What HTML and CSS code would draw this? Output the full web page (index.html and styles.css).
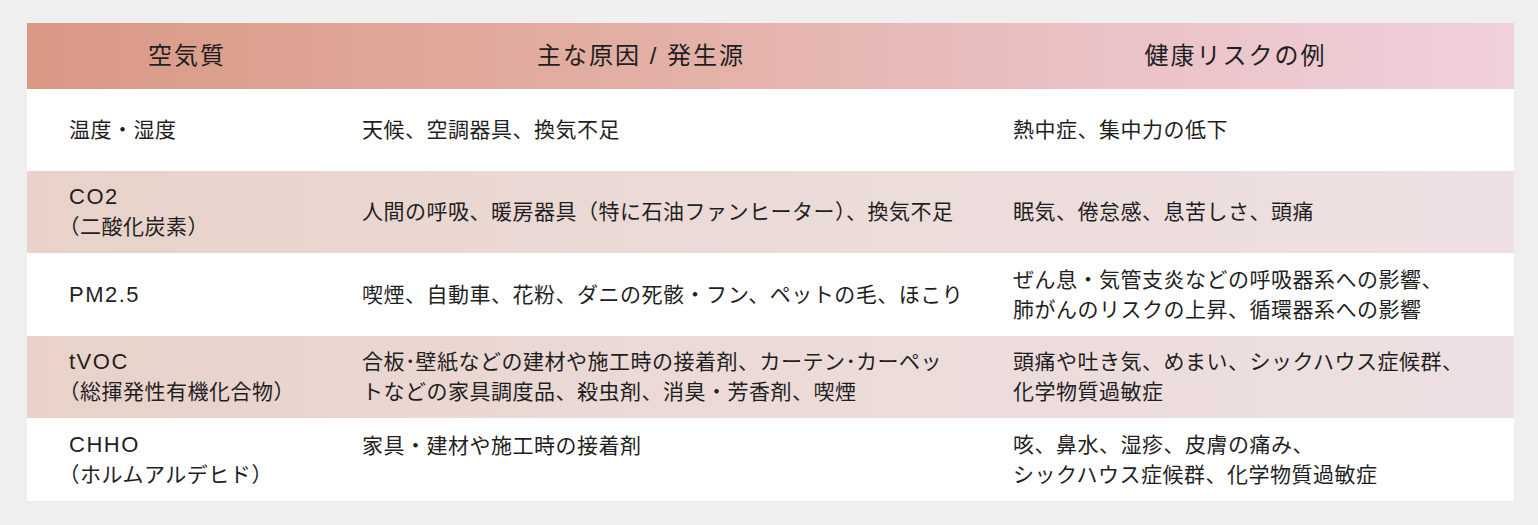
FILE: index.html
```html
<!DOCTYPE html>
<html lang="ja">
<head>
<meta charset="utf-8">
<title>空気質と健康リスク</title>
<link rel="stylesheet" href="styles.css">
</head>
<body>
<div class="page">
  <div class="table">
    <div class="row head">
      <div class="cell c1">空気質</div>
      <div class="cell c2">主な原因 / 発生源</div>
      <div class="cell c3">健康リスクの例</div>
    </div>
    <div class="row r1">
      <div class="cell c1">温度・湿度</div>
      <div class="cell c2">天候、空調器具、換気不足</div>
      <div class="cell c3">熱中症、集中力の低下</div>
    </div>
    <div class="row r2 shade">
      <div class="cell c1"><span class="lat">CO2</span><br><span class="hp">（</span>二酸化炭素<span class="hp">）</span></div>
      <div class="cell c2">人間の呼吸、暖房器具（特に石油ファンヒーター）、換気不足</div>
      <div class="cell c3">眠気、倦怠感、息苦しさ、頭痛</div>
    </div>
    <div class="row r3">
      <div class="cell c1"><span class="lat">PM2.5</span></div>
      <div class="cell c2">喫煙、自動車、花粉、ダニの死骸・フン、ペットの毛、ほこり</div>
      <div class="cell c3">ぜん息・気管支炎などの呼吸器系への影響、<br>肺がんのリスクの上昇、循環器系への影響</div>
    </div>
    <div class="row r4 shade">
      <div class="cell c1"><span class="lat">tVOC</span><br><span class="hp">（</span>総揮発性有機化合物<span class="hp">）</span></div>
      <div class="cell c2">合板<span class="hd">･</span>壁紙などの建材や施工時の接着剤、カーテン<span class="hd">･</span>カーペッ<br>トなどの家具調度品、殺虫剤、消臭・芳香剤、喫煙</div>
      <div class="cell c3">頭痛や吐き気、めまい、シックハウス症候群、<br>化学物質過敏症</div>
    </div>
    <div class="row r5">
      <div class="cell c1"><span class="lat">CHHO</span><br><span class="hp">（</span>ホルムアルデヒド<span class="hp">）</span></div>
      <div class="cell c2 top">家具・建材や施工時の接着剤</div>
      <div class="cell c3">咳、鼻水、湿疹、皮膚の痛み、<br>シックハウス症候群、化学物質過敏症</div>
    </div>
  </div>
</div>
</body>
</html>
```

FILE: styles.css
```css
html, body {
  margin: 0;
  padding: 0;
  background: #efefef;
}

body {
  font-family: "Liberation Sans", "Noto Sans CJK JP", sans-serif;
  color: #1f1f1f;
}

.page {
  padding: 23px 24px 24px 27px;
}

.table {
  display: flex;
  flex-direction: column;
  width: 1487px;
}

.row {
  display: grid;
  grid-template-columns: 320px 588px 579px;
  align-items: center;
  height: 82px;
  background: #ffffff;
}

.row.r3, .row.r5 {
  height: 83px;
}

.row.head {
  height: 66px;
  background: linear-gradient(to right, #d99884 0%, #e4b1a8 45%, #eac0c3 70%, #f0d0dc 100%);
}

.row.shade {
  background: linear-gradient(to right, #e8d2c9 0%, #ebdad7 45%, #eee0e2 100%);
}

.cell {
  font-size: 21px;
  line-height: 30px;
  letter-spacing: 0.5px;
  white-space: nowrap;
}

.lat {
  font-size: 22px;
  letter-spacing: 1.5px;
}

.head .cell {
  font-size: 24px;
  letter-spacing: 2px;
  text-align: center;
}

.head .c3 {
  padding-left: 22px;
}

.row:not(.head) .c1 { padding-left: 42px; }
.row:not(.head) .c2 { padding-left: 15px; }
.row:not(.head) .c3 { padding-left: 78px; }

.cell.top {
  align-self: start;
  padding-top: 13px;
}

.hp {
  font-feature-settings: "halt";
}

.hd {
  letter-spacing: 0;
}
```
